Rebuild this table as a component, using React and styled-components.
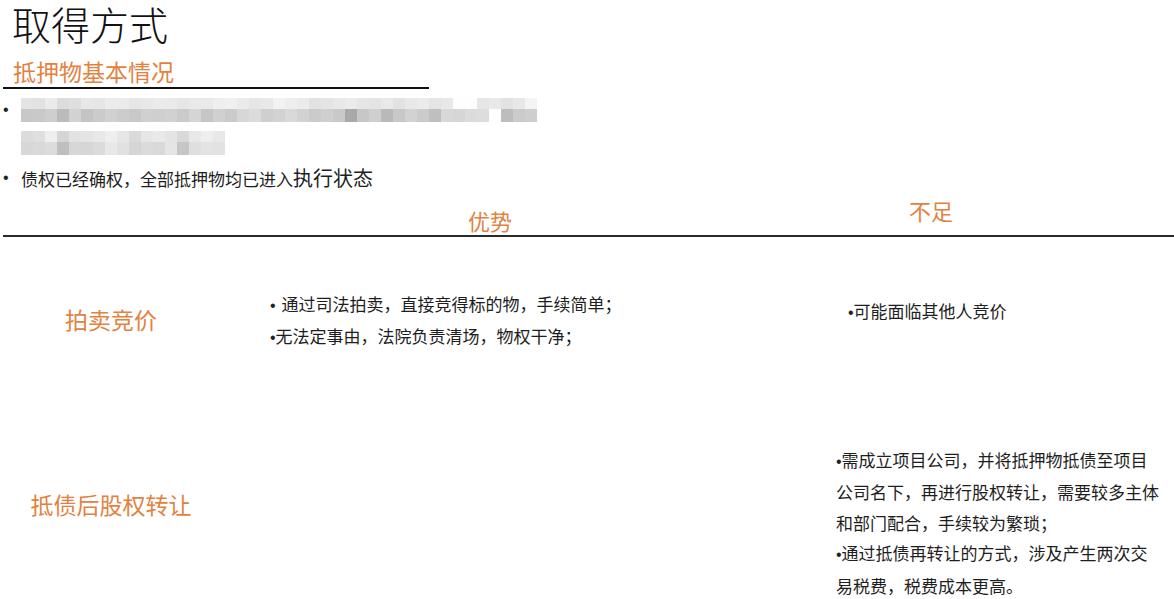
import React from 'react';
import styled, { createGlobalStyle } from 'styled-components';

const GlobalStyle = createGlobalStyle`
  html, body {
    margin: 0;
    padding: 0;
    background: #ffffff;
  }
  body {
    font-family: "Noto Sans CJK SC", "Liberation Sans", sans-serif;
    color: #1e1e1e;
  }
`;

const ORANGE = '#e2823f';

const Page = styled.div`
  width: 1174px;
  height: 599px;
  overflow: hidden;
  position: relative;
`;

const Title = styled.h1`
  margin: 0;
  padding: 3px 0 0 12px;
  font-size: 39px;
  line-height: 40px;
  font-weight: 300;
  color: #111;
`;

const Heading = styled.h2`
  margin: 16px 0 0 3px;
  width: 416px;
  padding: 0 0 4px 10px;
  font-size: 23px;
  line-height: 24px;
  font-weight: 400;
  color: ${ORANGE};
  border-bottom: 2px solid #111;
`;

const List = styled.ul`
  list-style: none;
  margin: 0;
  padding: 4px 0 0 0;
`;

const Item = styled.li`
  display: flex;
  margin-top: ${(p) => (p.$gap ? '2px' : '0')};
  font-size: 17px;
  line-height: 33px;
`;

const Dot = styled.span`
  flex: 0 0 auto;
  width: ${(p) => p.$w || 'auto'};
  padding-left: ${(p) => p.$pl || '0'};
  padding-right: ${(p) => p.$pr || '0'};
  font-family: "Liberation Sans", sans-serif;
  font-size: 16px;
  color: #222;
`;

const Lines = styled.div`
  display: flex;
  flex-direction: column;
`;

const BlurLine = styled.div`
  height: 33px;
  display: flex;
  align-items: center;
`;

const Cells = styled.div`
  display: grid;
  grid-template-rows: 11px 13px;
  grid-auto-flow: column;
  grid-auto-columns: 12px;
`;

const Cell = styled.span`
  display: block;
  background: ${(p) => p.$c};
`;

const Big = styled.span`
  font-size: 20px;
`;

const HeaderRow = styled.div`
  display: grid;
  grid-template-columns: 219px 536px 1fr;
  height: 40px;
  margin-left: 3px;
  border-bottom: 2px solid #2a2a2a;
`;

const HeadCell = styled.div`
  align-self: end;
  text-align: center;
  padding-bottom: ${(p) => p.$pb}px;
  padding-right: ${(p) => p.$pr || 0}px;
  font-size: 22px;
  line-height: 22px;
  color: ${ORANGE};
`;

const Row = styled.div`
  display: grid;
  grid-template-columns: 222px 536px 1fr;
  height: ${(p) => p.$h}px;
  align-items: center;
`;

const Label = styled.div`
  text-align: center;
  font-size: 23px;
  line-height: 24px;
  color: ${ORANGE};
`;

const Text = styled.div`
  padding-left: ${(p) => p.$pl}px;
  padding-top: ${(p) => p.$pt || 0}px;
  padding-bottom: ${(p) => p.$pb || 0}px;
  font-size: 17px;
  line-height: ${(p) => p.$lh || 30}px;
  white-space: nowrap;
  color: #1e1e1e;
`;

const top1 = 'e4e2ebdcdfe8e6ecebe6e8ebeae6e9eaeef0ebe6e8f2eeebe2e4e8ebe6e4e9e2e8ebe5e8fefee6e9e2e8f4'
  .match(/../g);
const bot1 = 'c8c9cebbd2c4cbd1ccc8d0cfd1cbd5c6d0cad7dccfd2d9d2cbcfc9a9c7cfb9c8d2cbbfd8d6dcddfebdcbcebf'
  .match(/../g);
const top2 = 'dcdfeed5e2e4e8eee6dae6e9e4d9e8eee8'.match(/../g);
const bot2 = 'd7d9dcbfd7d6dbe8e1d5dbd9e5c6dfe3e2'.match(/../g);

const hex = (h) => `#${h}${h}${h}`;

const Redacted = ({ top, bot }) => (
  <Cells>
    {top.map((t, i) => (
      <React.Fragment key={i}>
        <Cell $c={hex(t)} />
        <Cell $c={hex(bot[i])} />
      </React.Fragment>
    ))}
  </Cells>
);

const App = () => {
  return (
    <Page>
      <GlobalStyle />
      <Title>取得方式</Title>
      <Heading>抵押物基本情况</Heading>
      <List>
        <Item>
          <Dot $w="18px" $pl="3px">•</Dot>
          <Lines>
            <BlurLine>
              <Redacted top={top1} bot={bot1} />
            </BlurLine>
            <BlurLine>
              <Redacted top={top2} bot={bot2} />
            </BlurLine>
          </Lines>
        </Item>
        <Item $gap>
          <Dot $w="18px" $pl="3px">•</Dot>
          <span>
            债权已经确权，全部抵押物均已进入<Big>执行状态</Big>
          </span>
        </Item>
      </List>

      <HeaderRow>
        <div />
        <HeadCell $pb={4}>优势</HeadCell>
        <HeadCell $pb={14} $pr={70}>不足</HeadCell>
      </HeaderRow>

      <Row $h={164}>
        <Label>拍卖竞价</Label>
        <Text $pl={48} $pt={4}>
          <Dot $pr="6px">•</Dot>通过司法拍卖，直接竞得标的物，手续简单；
          <br />
          <Dot>•</Dot>无法定事由，法院负责清场，物权干净；
        </Text>
        <Text $pl={90} $pb={14}>
          <Dot>•</Dot>可能面临其他人竞价
        </Text>
      </Row>

      <Row $h={206}>
        <Label>抵债后股权转让</Label>
        <div />
        <Text $pl={78} $pt={38} $lh={30.4}>
          <Dot>•</Dot>需成立项目公司，并将抵押物抵债至项目
          <br />
          公司名下，再进行股权转让，需要较多主体
          <br />
          和部门配合，手续较为繁琐；
          <br />
          <Dot>•</Dot>通过抵债再转让的方式，涉及产生两次交
          <br />
          易税费，税费成本更高。
        </Text>
      </Row>
    </Page>
  );
};

export default App;
